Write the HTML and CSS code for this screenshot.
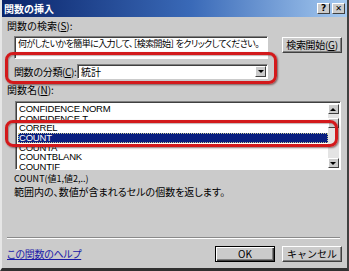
FILE: index.html
```html
<!DOCTYPE html>
<html lang="ja">
<head>
    <meta charset="UTF-8">
    <meta name="viewport" content="width=device-width, initial-scale=1.0">
    <link rel="stylesheet" href="styles.css">
    <title>関数の挿入</title>
</head>

<body>
    <div class="window">
        <div class="titlebar">
            <span class="title">関数の挿入</span>
            <div class="caption-buttons">
                <span class="cap-btn">?</span>
                <span class="cap-btn close">✕</span>
            </div>
        </div>

        <div class="body">
            <div class="label first">関数の検索(<u>S</u>):</div>

            <div class="search-row">
                <div class="textbox">
                    <span class="hint">何がしたいかを簡単に入力して、［検索開始］ をクリックしてください。</span>
                </div>
                <button class="btn search-btn">検索開始(<u>G</u>)</button>
            </div>

            <div class="category-row">
                <span class="label cat-label">関数の分類(<u>C</u>):</span>
                <div class="combo">
                    <span class="combo-text">統計</span>
                    <span class="combo-arrow"></span>
                </div>
            </div>

            <div class="label name-label">関数名(<u>N</u>):</div>

            <div class="listbox">
                <ul class="items">
                    <li>CONFIDENCE.NORM</li>
                    <li>CONFIDENCE.T</li>
                    <li>CORREL</li>
                    <li class="selected">COUNT</li>
                    <li>COUNTA</li>
                    <li>COUNTBLANK</li>
                    <li>COUNTIF</li>
                </ul>
                <div class="scrollbar">
                    <span class="sb-btn up"></span>
                    <span class="sb-thumb"></span>
                    <span class="sb-track"></span>
                    <span class="sb-btn down"></span>
                </div>
            </div>

            <div class="description">
                <div class="syntax">COUNT(値1,値2,..)</div>
                <div class="desc-text">範囲内の、数値が含まれるセルの個数を返します。</div>
            </div>

            <div class="separator"></div>

            <div class="footer">
                <a class="help-link" href="#">この関数のヘルプ</a>
                <div class="footer-buttons">
                    <button class="btn ok-btn">OK</button>
                    <button class="btn">キャンセル</button>
                </div>
            </div>
        </div>

        <!-- annotation marks drawn over the dialog -->
        <div class="mark mark-category"></div>
        <div class="mark mark-count"></div>
    </div>
</body>
</html>
```

FILE: styles.css
```css
* {
    box-sizing: border-box;
}

body {
    margin: 0;
    font-family: "Liberation Sans", "Noto Sans CJK JP", sans-serif;
    font-size: 10px;
    color: #000;
    background: #cbcbcb;
}

.window {
    position: relative;
    width: 349px;
    height: 271px;
    background: #cbcbcb;
    border-left: 2px solid #e6e6e6;
    border-right: 2px solid #404040;
    border-bottom: 3px solid #303030;
    overflow: hidden;
}

.titlebar {
    height: 17px;
    display: flex;
    align-items: center;
    padding: 0 2px 0 2px;
    background: linear-gradient(to right, #0a246a, #3a6ab8 55%, #a6caf0);
}

.title {
    color: #fff;
    font-family: "Noto Sans CJK JP", sans-serif;
    font-size: 10px;
    font-weight: bold;
    line-height: 12px;
}

.caption-buttons {
    margin-left: auto;
    display: flex;
    gap: 1px;
}

.cap-btn {
    width: 13px;
    height: 11px;
    background: #cbcbcb;
    border: 1px solid;
    border-color: #fff #404040 #404040 #fff;
    font-family: "DejaVu Sans", sans-serif;
    font-size: 9px;
    font-weight: bold;
    line-height: 9px;
    text-align: center;
}

.close {
    font-size: 8px;
    margin-left: 1px;
}

.body {
    padding: 0 5px;
}

.label {
    font-family: "Noto Sans CJK JP", sans-serif;
    line-height: 12px;
    white-space: nowrap;
}

.first {
    margin-top: 3px;
}

.search-row {
    display: flex;
    margin-top: 4px;
}

.textbox {
    margin-left: 7px;
    width: 254px;
    height: 23px;
    background: #fff;
    border: 1px solid;
    border-color: #808080 #fff #fff #808080;
    box-shadow: inset 1px 1px 0 #404040;
    padding: 1px 0 0 3px;
    overflow: hidden;
}

.hint {
    font-family: "Noto Sans CJK JP", sans-serif;
    font-size: 9px;
    line-height: 11px;
    font-feature-settings: "palt";
    letter-spacing: -0.6px;
    white-space: nowrap;
}

.btn {
    font-family: "Noto Sans CJK JP", sans-serif;
    font-size: 10px;
    height: 16px;
    padding: 0;
    background: #cbcbcb;
    border: 1px solid;
    border-color: #fff #404040 #404040 #fff;
    box-shadow: inset -1px -1px 0 #808080;
    line-height: 12px;
    color: #000;
    white-space: nowrap;
}

.search-btn {
    margin-left: auto;
    margin-top: 1px;
    width: 60px;
    letter-spacing: -0.3px;
}

.category-row {
    display: flex;
    align-items: center;
    margin-top: 5px;
    padding-left: 7px;
}

.cat-label {
    flex: none;
    width: 63px;
    letter-spacing: -0.4px;
}

.combo {
    width: 191px;
    height: 15px;
    background: #fff;
    border: 1px solid;
    border-color: #808080 #fff #fff #808080;
    box-shadow: inset 1px 1px 0 #404040;
    display: flex;
    align-items: center;
    padding: 0 1px 0 3px;
}

.combo-text {
    font-family: "Noto Sans CJK JP", sans-serif;
    line-height: 11px;
}

.combo-arrow {
    margin-left: auto;
    width: 11px;
    height: 11px;
    background: #cbcbcb;
    border: 1px solid;
    border-color: #fff #404040 #404040 #fff;
    position: relative;
}

.combo-arrow::after {
    content: "";
    position: absolute;
    left: 2px;
    top: 3px;
    border-left: 3px solid transparent;
    border-right: 3px solid transparent;
    border-top: 3px solid #000;
}

.name-label {
    margin-top: 5px;
}

.listbox {
    margin: 5px 1px 0 8px;
    height: 69px;
    background: #fff;
    border: 1px solid;
    border-color: #808080 #fff #fff #808080;
    box-shadow: inset 1px 1px 0 #404040;
    display: flex;
    padding: 2px 1px 1px 2px;
}

.items {
    list-style: none;
    margin: 0;
    padding: 0;
    flex: 1;
}

.items li {
    height: 9.7px;
    line-height: 9.7px;
    font-size: 9.5px;
    padding-left: 1px;
    letter-spacing: -0.2px;
}

.items .selected {
    background: #0a1f80;
    color: #fff;
    outline: 1px dotted #c8c890;
    outline-offset: -1px;
}

.scrollbar {
    width: 11px;
    display: flex;
    flex-direction: column;
    background: #e4e4e4;
}

.sb-btn, .sb-thumb {
    height: 10px;
    background: #cbcbcb;
    border: 1px solid;
    border-color: #fff #404040 #404040 #fff;
    position: relative;
}

.sb-btn::after {
    content: "";
    position: absolute;
    left: 1px;
    top: 3px;
    border-left: 3px solid transparent;
    border-right: 3px solid transparent;
}

.up::after {
    border-bottom: 3px solid #000;
}

.down::after {
    border-top: 3px solid #000;
}

.sb-thumb {
    margin-top: 4px;
}

.sb-track {
    flex: 1;
}

.description {
    margin-top: 2px;
    padding-left: 7px;
    font-family: "Noto Sans CJK JP", sans-serif;
    line-height: 13px;
}

.syntax {
    font-size: 9px;
}

.desc-text {
    font-feature-settings: "palt";
}

.separator {
    margin: 39px 2px 0 0;
    height: 2px;
    border-top: 1px solid #8a8a8a;
    border-bottom: 1px solid #fff;
}

.footer {
    display: flex;
    align-items: center;
    margin-top: 7px;
}

.help-link {
    font-family: "Noto Sans CJK JP", sans-serif;
    color: #1a1aa8;
    font-feature-settings: "palt";
    letter-spacing: -0.3px;
    line-height: 12px;
}

.footer-buttons {
    margin-left: auto;
    display: flex;
    gap: 7px;
}

.footer-buttons .btn {
    width: 60px;
}

.ok-btn {
    width: 61px;
    border-color: #000;
    box-shadow: inset 1px 1px 0 #fff, inset -1px -1px 0 #404040, inset -2px -2px 0 #808080;
}

.mark {
    position: absolute;
    border: 3px solid #d3191b;
    border-radius: 8px;
    box-shadow: 1px 1px 2px rgba(60, 0, 0, 0.55), inset 1px 1px 1px rgba(60, 0, 0, 0.3);
}

.mark-category {
    left: 3px;
    top: 52px;
    width: 272px;
    height: 32px;
}

.mark-count {
    left: 3px;
    top: 120px;
    width: 333px;
    height: 27px;
}
```
